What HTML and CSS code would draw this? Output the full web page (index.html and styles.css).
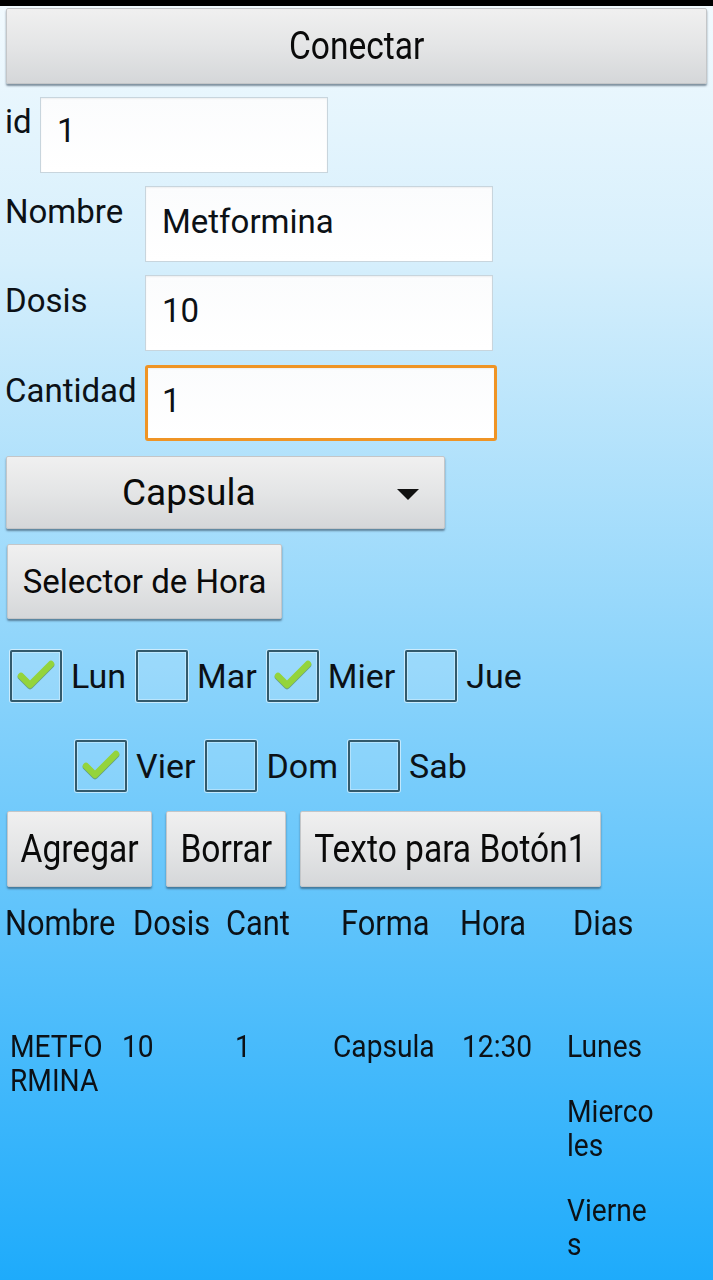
FILE: index.html
```html
<!DOCTYPE html>
<html lang="es">
<head>
<meta charset="utf-8">
<title>Medicamentos</title>
<link rel="stylesheet" href="styles.css">
</head>
<body>
<div class="statusbar"></div>
<main class="app">
  <div class="btn btn-connect"><span class="cond">Conectar</span></div>

  <div class="field field-id">
    <span class="label">id</span>
    <div class="input input-id">1</div>
  </div>
  <div class="field">
    <span class="label label-fixed">Nombre</span>
    <div class="input input-wide">Metformina</div>
  </div>
  <div class="field">
    <span class="label label-fixed">Dosis</span>
    <div class="input input-wide">10</div>
  </div>
  <div class="field field-focus">
    <span class="label label-fixed">Cantidad</span>
    <div class="input input-wide input-focus">1</div>
  </div>

  <div class="btn spinner">
    <span class="spinner-text">Capsula</span>
    <svg class="spinner-arrow" width="22" height="12" viewBox="0 0 22 12"><path d="M0 0 H22 L11 11 Z" fill="#111"/></svg>
  </div>

  <div class="btn btn-time"><span>Selector de Hora</span></div>

  <div class="days days-1">
    <div class="day"><span class="box"><svg viewBox="0 0 48 48" class="tick"><path d="M9 24 L18 33 L39 12" /></svg></span><span class="day-label">Lun</span></div>
    <div class="day"><span class="box"></span><span class="day-label">Mar</span></div>
    <div class="day"><span class="box"><svg viewBox="0 0 48 48" class="tick"><path d="M9 24 L18 33 L39 12" /></svg></span><span class="day-label">Mier</span></div>
    <div class="day"><span class="box"></span><span class="day-label">Jue</span></div>
  </div>
  <div class="days days-2">
    <div class="day"><span class="box"><svg viewBox="0 0 48 48" class="tick"><path d="M9 24 L18 33 L39 12" /></svg></span><span class="day-label">Vier</span></div>
    <div class="day"><span class="box"></span><span class="day-label">Dom</span></div>
    <div class="day"><span class="box"></span><span class="day-label">Sab</span></div>
  </div>

  <div class="actions">
    <div class="btn btn-small btn-add"><span class="cond">Agregar</span></div>
    <div class="btn btn-small btn-del"><span class="cond">Borrar</span></div>
    <div class="btn btn-small btn-text"><span class="cond">Texto para Botón1</span></div>
  </div>

  <div class="table-head">
    <span class="cond-l">Nombre</span>
    <span class="cond-l">Dosis</span>
    <span class="cond-l">Cant</span>
    <span class="cond-l">Forma</span>
    <span class="cond-l">Hora</span>
    <span class="cond-l">Dias</span>
  </div>

  <div class="table-row">
    <div class="cell"><span class="cond-l">METFO</span><span class="cond-l">RMINA</span></div>
    <div class="cell"><span class="cond-l">10</span></div>
    <div class="cell"><span class="cond-l">1</span></div>
    <div class="cell"><span class="cond-l">Capsula</span></div>
    <div class="cell"><span class="cond-l">12:30</span></div>
    <div class="cell cell-days">
      <div class="dayname"><span class="cond-l">Lunes</span></div>
      <div class="dayname"><span class="cond-l">Mierco</span><span class="cond-l">les</span></div>
      <div class="dayname"><span class="cond-l">Vierne</span><span class="cond-l">s</span></div>
    </div>
  </div>
</main>
</body>
</html>
```
FILE: styles.css
```css
* { box-sizing: border-box; }
html, body {
  margin: 0;
  padding: 0;
}
body {
  width: 713px;
  height: 1280px;
  overflow: hidden;
  font-family: Roboto, "Liberation Sans", sans-serif;
  color: #0c1116;
  background: linear-gradient(to bottom, #f2fafe 0px, #d6effc 260px, #8fd5fb 650px, #1eabfb 1280px);
}
.statusbar {
  height: 6px;
  background: #000;
}
.app {
  display: flex;
  flex-direction: column;
}

/* buttons */
.btn {
  display: flex;
  align-items: center;
  justify-content: center;
  background: linear-gradient(to bottom, #f0f0f0 0%, #e4e5e6 50%, #d5d7d9 100%);
  border: 1px solid #c4c6c8;
  border-radius: 2px;
  box-shadow: 0 2px 2px rgba(40, 60, 80, 0.55);
  color: #0a0a0a;
}
.cond {
  display: inline-block;
  transform: scaleX(0.86);
  white-space: nowrap;
}
.btn-connect {
  margin: 2px 6px 0 6px;
  height: 76px;
  font-size: 39px;
}

/* fields */
.field {
  display: flex;
  align-items: flex-start;
  margin-top: 13px;
  padding-left: 5px;
}
.field-focus { margin-top: 14px; }
.label {
  font-size: 33px;
  line-height: 38px;
  padding-top: 7px;
}
.field-id .label { width: 35px; padding-top: 6px; }
.label-fixed { width: 140px; }
.input {
  height: 76px;
  background: linear-gradient(to bottom, #fbfcfd, #ffffff);
  border: 1px solid #c8d5dd;
  box-shadow: inset 0 1px 2px rgba(0,0,0,0.06);
  font-size: 33px;
  padding-left: 16px;
  display: flex;
  align-items: center;
  padding-bottom: 6px;
}
.input-id { width: 288px; padding-bottom: 9px; }
.input-wide { width: 348px; }
.input-focus {
  width: 352px;
  border: 3px solid #ef9425;
  border-radius: 3px;
  padding-left: 14px;
  padding-bottom: 6px;
}

/* spinner */
.spinner {
  margin: 15px 0 0 6px;
  width: 439px;
  height: 73px;
  position: relative;
  justify-content: flex-start;
  font-size: 37px;
}
.spinner-text {
  margin-left: 115px;
}
.spinner-arrow {
  position: absolute;
  left: 390px;
  top: 32px;
}

.btn-time {
  margin: 15px 0 0 7px;
  width: 275px;
  height: 75px;
  font-size: 33px;
}

/* day checkboxes */
.days {
  display: flex;
  align-items: center;
  gap: 10px;
  height: 54px;
}
.days-1 { margin-top: 30px; padding-left: 10px; }
.days-2 { margin-top: 36px; padding-left: 75px; }
.day {
  display: flex;
  align-items: center;
  gap: 9px;
}
.box {
  width: 52px;
  height: 52px;
  border: 2px solid #325a6c;
  border-radius: 2px;
  background: rgba(255,255,255,0.12);
  box-shadow: 0 0 0 1px rgba(255,255,255,0.55), inset 0 0 0 1px rgba(255,255,255,0.35);
  position: relative;
}
.tick {
  position: absolute;
  left: 0;
  top: 0;
  width: 48px;
  height: 48px;
  fill: none;
  stroke: #94d43c;
  stroke-width: 6.5;
  stroke-linecap: round;
  stroke-linejoin: round;
  filter: drop-shadow(0 1px 0 rgba(60,110,40,0.55));
}
.day-label {
  font-size: 34px;
}

/* action buttons */
.actions {
  display: flex;
  gap: 14px;
  margin-top: 18px;
  padding-left: 7px;
}
.btn-small {
  height: 76px;
  font-size: 39px;
}
.btn-add { width: 145px; }
.btn-del { width: 120px; }
.btn-text { width: 301px; }

/* table */
.cond-l {
  display: block;
  transform: scaleX(0.88);
  transform-origin: left center;
  white-space: nowrap;
}
.table-head {
  display: grid;
  grid-template-columns: 128px 93px 115px 119px 113px 1fr;
  padding-left: 5px;
  margin-top: 20px;
  font-size: 35px;
  line-height: 34px;
}
.table-row {
  display: grid;
  grid-template-columns: 112px 113px 98px 129px 105px 1fr;
  padding-left: 10px;
  margin-top: 88px;
  font-size: 32px;
  line-height: 34px;
}
.cell-days {
  display: flex;
  flex-direction: column;
  gap: 31px;
}
```
